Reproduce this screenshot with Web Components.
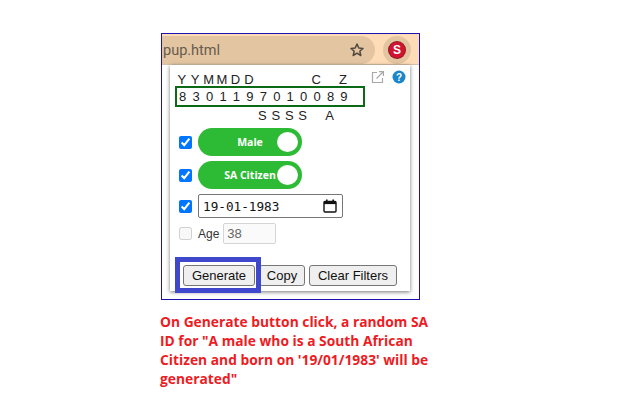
<!DOCTYPE html>
<html>
<head>
<meta charset="utf-8">
<title>SA ID popup</title>
<style>
  html, body { margin: 0; background: #fff; }
  body { padding: 33px 0 0 161px; font-family: Arial, "Liberation Sans", sans-serif; }
</style>
</head>
<body>
<shot-frame>
  <browser-bar slot="bar" url="pup.html"></browser-bar>
  <id-popup slot="popup"></id-popup>
</shot-frame>
<note-text>On Generate button click, a random SA<br>ID for "A male who is a South African<br>Citizen and born on '19/01/1983' will be<br>generated"</note-text>

<script>
// outer blue outline round the cropped browser
class ShotFrame extends HTMLElement {
  constructor() {
    super();
    this.attachShadow({ mode: 'open' });
    this.shadowRoot.innerHTML = `
      <style>
        :host { display: block; width: 257px; height: 265px; border: 1px solid #1c12b0; background: #fff; }
        .wrap { display: flex; flex-direction: column; height: 100%; }
      </style>
      <div class="wrap">
        <slot name="bar"></slot>
        <slot name="popup"></slot>
      </div>
    `;
  }
}

class BrowserBar extends HTMLElement {
  constructor() {
    super();
    this.attachShadow({ mode: 'open' });
    this.shadowRoot.innerHTML = `
      <style>
        :host { display: block; height: 31px; background: #fedcb8; border-bottom: 1px solid #d9c2a8; box-sizing: border-box; }
        .row { display: flex; align-items: center; height: 30px; }
        .pill {
          width: 213px; height: 28px; margin-top: 1px; background: #e3c5a1;
          border-radius: 0 14px 14px 0; display: flex; align-items: center; justify-content: space-between;
          padding: 0 10px 0 1px; box-sizing: border-box;
          font: 14.5px Roboto, "Liberation Sans", sans-serif; color: #665c4f;
        }
        .pill span { padding-top: 1px; }
        .star { width: 16px; height: 16px; display: block; }
        .ext {
          width: 28px; height: 28px; margin: 1px 0 0 8px; border-radius: 50%; background: #e3c5a1;
          display: flex; align-items: center; justify-content: center;
        }
        .badge {
          width: 16px; height: 16px; border-radius: 50%; background: #d3122f; color: #fff;
          box-shadow: 0 0 0 1px #8a1a24;
          font: bold 12px/16px "Liberation Sans", sans-serif; text-align: center;
        }
      </style>
      <div class="row">
        <div class="pill">
          <span>${this.getAttribute('url')}</span>
          <svg class="star" viewBox="0 0 16 16"><path d="M8 2l1.8 4 4.2.4-3.2 2.8 1 4.3L8 11.2l-3.8 2.3 1-4.3L2 6.4 6.2 6z" fill="none" stroke="#50483f" stroke-width="1.5" stroke-linejoin="round"/></svg>
        </div>
        <div class="ext"><div class="badge">S</div></div>
      </div>
    `;
  }
}

// one row of 13 character cells, blanks are written as _
class IdRow extends HTMLElement {
  constructor() {
    super();
    this.attachShadow({ mode: 'open' });
    const cells = (this.getAttribute('chars') || '').split('')
      .map(c => `<span>${c === '_' ? '' : c}</span>`).join('');
    this.shadowRoot.innerHTML = `
      <style>
        :host { display: block; color: #222; font: 13px/14px Arial, "Liberation Sans", sans-serif; }
        .cells { display: grid; grid-template-columns: repeat(13, 13.45px); }
        span { text-align: center; height: 14px; }
      </style>
      <div class="cells">${cells}</div>
    `;
  }
}

class IdToggle extends HTMLElement {
  constructor() {
    super();
    this.attachShadow({ mode: 'open' });
    this.shadowRoot.innerHTML = `
      <style>
        :host { display: block; width: 104px; height: 28px; }
        .track {
          position: relative; height: 100%; border-radius: 14px; background: #2dba35; color: #fff;
          font: bold 10.5px/28px "Open Sans", "Liberation Sans", sans-serif;
          text-align: center;
        }
        .knob { position: absolute; right: 4px; top: 4px; width: 21px; height: 20px; border-radius: 50%; background: #fff; }
      </style>
      <div class="track"><slot></slot><div class="knob"></div></div>
    `;
  }
}

class DateBox extends HTMLElement {
  constructor() {
    super();
    this.attachShadow({ mode: 'open' });
    this.shadowRoot.innerHTML = `
      <style>
        :host {
          display: flex; align-items: center; justify-content: space-between; box-sizing: border-box;
          width: 145px; height: 24px; padding: 0 5px 0 4px; background: #fff;
          border: 1px solid #767676; border-radius: 2px;
          font: 12.7px "DejaVu Sans Mono", "Liberation Mono", monospace; color: #111;
        }
        svg { width: 14px; height: 14px; display: block; }
      </style>
      <slot></slot>
      <svg viewBox="0 0 14 14"><rect x="1" y="2.5" width="12" height="10.5" rx="1" fill="none" stroke="#111" stroke-width="1.4"/><rect x="1" y="2.5" width="12" height="2.6" fill="#111"/><rect x="3" y="0.5" width="1.6" height="2.5" fill="#111"/><rect x="9.4" y="0.5" width="1.6" height="2.5" fill="#111"/></svg>
    `;
  }
}

class IdPopup extends HTMLElement {
  constructor() {
    super();
    this.attachShadow({ mode: 'open' });
    this.shadowRoot.innerHTML = `
      <style>
        :host {
          display: block; position: relative; width: 240px; height: 226px; margin-left: 8px;
          background: #fff; box-sizing: border-box; padding: 8px 5px 0 5px;
          box-shadow: 0 1px 4px rgba(0,0,0,.55);
        }
        .tools { position: absolute; right: 4px; top: 5px; display: flex; gap: 7px; align-items: center; }
        .tools svg { display: block; }
        .idbox {
          width: 190px; height: 21px; box-sizing: border-box; border: 2px solid #0c6a17;
          display: flex; align-items: center; margin: -1px 0 2px 0;
        }
        .idbox id-row { margin-left: -1px; }
        .filters { display: flex; flex-direction: column; gap: 5px; margin-top: 5px; padding-left: 4px; }
        .line { display: flex; align-items: center; gap: 6px; }
        input[type=checkbox] { width: 13px; height: 13px; margin: 0; accent-color: #0075ff; }
        .age { font: 12px Arial, "Liberation Sans", sans-serif; color: #333; }
        .agebox {
          width: 53px; height: 21px; box-sizing: border-box; margin-left: -2px; padding: 0 3px;
          border: 1px solid #d5d5d5; border-radius: 2px; background: #fafafa; color: #666;
          font: 13px/19px Arial, "Liberation Sans", sans-serif;
        }
        .buttons { display: flex; gap: 4px; position: absolute; left: 13px; top: 200px; }
        button {
          height: 21px; padding: 0; box-sizing: border-box; border: 1px solid #767676; border-radius: 3px;
          background: #efefef; color: #111; font: 13px Arial, "Liberation Sans", sans-serif;
        }
        .mark { position: absolute; left: 5px; top: 192px; width: 86px; height: 36px; box-sizing: border-box; border: 5px solid #3f48cc; }
      </style>
      <div class="tools">
        <svg width="14" height="14" viewBox="0 0 14 14" fill="none" stroke="#a9a9a9" stroke-width="1.2"><path d="M6 2.5H1.5v10h10V8"/><path d="M5.5 8.5L12 2M8 1.6h4.4V6"/></svg>
        <svg width="14" height="14" viewBox="0 0 14 14"><circle cx="7" cy="7" r="6.5" fill="#1b87c9"/><text x="7" y="10.5" text-anchor="middle" font-family="Liberation Sans" font-weight="bold" font-size="10" fill="#fff">?</text></svg>
      </div>
      <id-row chars="YYMMDD____C_Z"></id-row>
      <div class="idbox"><id-row chars="8301197010089"></id-row></div>
      <id-row chars="______SSSS_A"></id-row>
      <div class="filters">
        <div class="line"><input type="checkbox" checked><id-toggle>Male</id-toggle></div>
        <div class="line"><input type="checkbox" checked><id-toggle>SA Citizen</id-toggle></div>
        <div class="line"><input type="checkbox" checked><date-box>19-01-1983</date-box></div>
        <div class="line age"><input type="checkbox" disabled><span>Age</span><div class="agebox">38</div></div>
      </div>
      <div class="buttons">
        <button style="width:72px">Generate</button>
        <button style="width:46px">Copy</button>
        <button style="width:88px">Clear Filters</button>
      </div>
      <div class="mark"></div>
    `;
  }
}

class NoteText extends HTMLElement {
  constructor() {
    super();
    this.attachShadow({ mode: 'open' });
    this.shadowRoot.innerHTML = `
      <style>
        :host {
          display: block; margin: 12px 0 0 -1px; width: 300px; color: #ed1c24;
          font: bold 13.8px/19px "Open Sans", "Noto Sans", sans-serif;
        }
      </style>
      <slot></slot>
    `;
  }
}

customElements.define('shot-frame', ShotFrame);
customElements.define('browser-bar', BrowserBar);
customElements.define('id-row', IdRow);
customElements.define('id-toggle', IdToggle);
customElements.define('date-box', DateBox);
customElements.define('id-popup', IdPopup);
customElements.define('note-text', NoteText);
</script>
</body>
</html>
